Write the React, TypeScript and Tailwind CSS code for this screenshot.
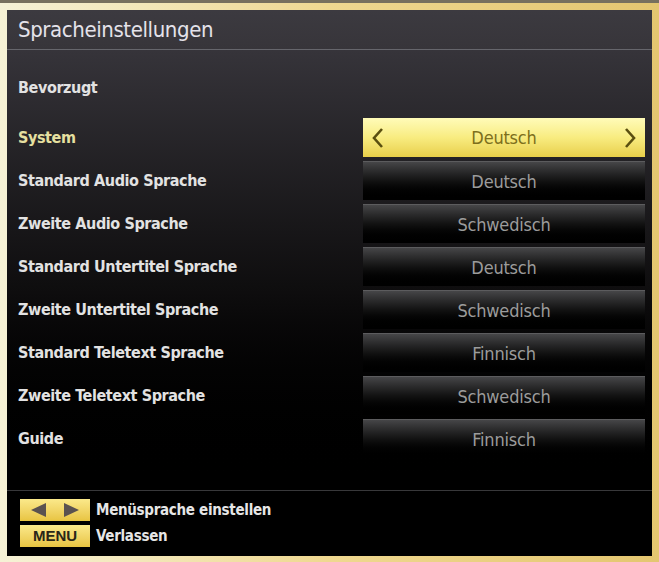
import React from 'react';

const rows = [
  { label: 'System', value: 'Deutsch', active: true },
  { label: 'Standard Audio Sprache', value: 'Deutsch' },
  { label: 'Zweite Audio Sprache', value: 'Schwedisch' },
  { label: 'Standard Untertitel Sprache', value: 'Deutsch' },
  { label: 'Zweite Untertitel Sprache', value: 'Schwedisch' },
  { label: 'Standard Teletext Sprache', value: 'Finnisch' },
  { label: 'Zweite Teletext Sprache', value: 'Schwedisch' },
  { label: 'Guide', value: 'Finnisch' },
];

const font = { fontFamily: '"DejaVu Sans Condensed", "Liberation Sans", sans-serif' };

function Row({ label, value, active }: { label: string; value: string; active?: boolean }) {
  return (
    <div className="flex h-[43px] items-center">
      <div className={`flex-1 pl-[11px] text-[16px] font-bold tracking-[-0.4px] ${active ? 'text-[#e6e0a0]' : 'text-[#e2e2e2]'}`}>{label}</div>
      {active ? (
        <div className="mr-[7px] flex h-[39px] w-[282px] items-center justify-between bg-gradient-to-b from-[#fffbb8] via-[#f8ec80] to-[#e8cf48] px-[8px] text-[#7d6f1c]">
          <svg width="14" height="22" viewBox="0 0 14 22"><path d="M11 2 L3 11 L11 20" fill="none" stroke="#5a4f10" strokeWidth="2.6" /></svg>
          <span className="text-[18px] tracking-[-0.2px]">{value}</span>
          <svg width="14" height="22" viewBox="0 0 14 22"><path d="M3 2 L11 11 L3 20" fill="none" stroke="#5a4f10" strokeWidth="2.6" /></svg>
        </div>
      ) : (
        <div className="mr-[7px] flex h-[39px] w-[282px] items-center justify-center border-t border-[#5c5c5e] bg-gradient-to-b from-[#464648] via-[#121212] to-[#000000] text-[18px] tracking-[-0.2px] text-[#9c9c9c]">
          {value}
        </div>
      )}
    </div>
  );
}

export default function App() {
  return (
    <div className="flex h-[562px] w-[659px] flex-col bg-gradient-to-r from-[#f6f2d6] via-[#efd890] to-[#e4c670]" style={font}>
      <div className="h-[3px] bg-[#77705e]" />
      <div className="ml-[7px] mr-[7px] mt-[7px] mb-[6px] flex flex-1 flex-col bg-black">
        {/* Titel */}
        <div className="flex h-[40px] items-center border-b border-[#66666c] bg-gradient-to-b from-[#3c3a40] to-[#37353a] pl-[11px]">
          <span className="text-[22px] tracking-[-0.4px] text-[#e4e2ea]">Spracheinstellungen</span>
        </div>

        {/* Inhalt */}
        <div className="flex flex-1 flex-col bg-gradient-to-b from-[#36343a] via-[#0e0d0e] via-55% to-black pt-[16px]">
          <div className="flex h-[43px] items-center pl-[11px] text-[16px] font-bold tracking-[-0.4px] text-[#e2e2e2]">Bevorzugt</div>
          <div className="mt-[7px]">
            {rows.map(r => (
              <Row key={r.label} {...r} />
            ))}
          </div>
        </div>

        {/* Fußzeile */}
        <div className="flex h-[66px] flex-col gap-[3px] border-t border-[#38383a] pl-[13px] pt-[8px]">
          <div className="flex items-center gap-[6px]">
            <div className="flex h-[22px] w-[70px] items-center justify-center gap-[16px] bg-gradient-to-b from-[#fbe98a] to-[#e8c440]">
              <svg width="16" height="14" viewBox="0 0 16 14"><path d="M15 0 L0 7 L15 14 Z" fill="#5a5250" /></svg>
              <svg width="16" height="14" viewBox="0 0 16 14"><path d="M1 0 L16 7 L1 14 Z" fill="#5a5250" /></svg>
            </div>
            <span className="text-[15px] font-bold tracking-[-0.3px] text-[#e6e6e6]">Menüsprache einstellen</span>
          </div>
          <div className="flex items-center gap-[6px]">
            <div className="flex h-[22px] w-[70px] items-center justify-center bg-gradient-to-b from-[#fbe98a] to-[#e8c440] text-[15px] font-bold text-[#2a2618]" style={{ fontFamily: '"Liberation Sans", sans-serif' }}>
              MENU
            </div>
            <span className="text-[15px] font-bold tracking-[-0.3px] text-[#e6e6e6]">Verlassen</span>
          </div>
        </div>
      </div>
    </div>
  );
}
